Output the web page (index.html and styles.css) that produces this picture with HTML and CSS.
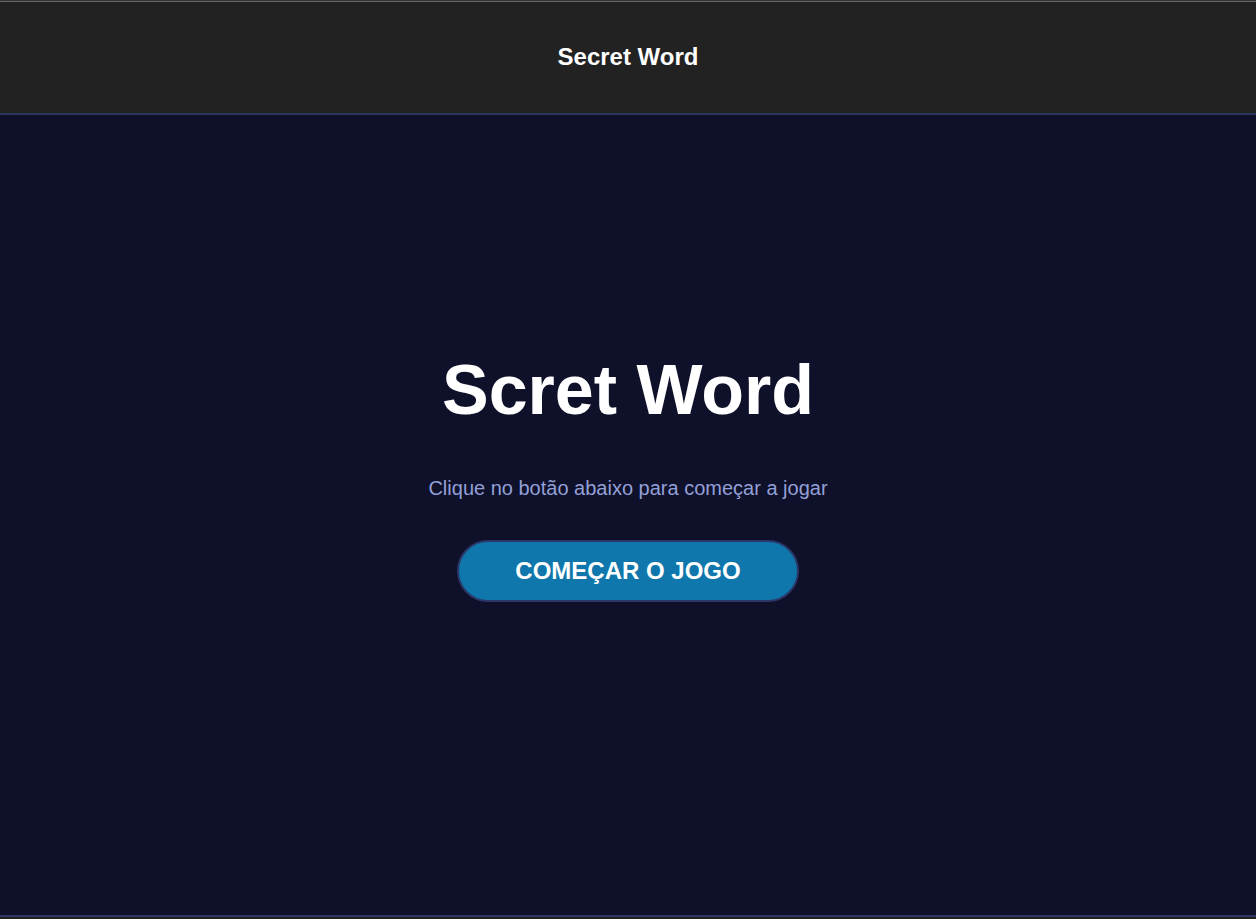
FILE: index.html
```html
<!DOCTYPE html>
<html lang="pt-BR">
<head>
  <meta charset="utf-8">
  <meta name="viewport" content="width=device-width, initial-scale=1">
  <title>Secret Word</title>
  <link rel="stylesheet" href="styles.css">
</head>
<body>
  <header class="header">
    <h2 class="header-title">Secret Word</h2>
  </header>
  <main class="start">
    <h1 class="start-title">Scret Word</h1>
    <p class="start-text">Clique no botão abaixo para começar a jogar</p>
    <button class="start-button" type="button">COMEÇAR O JOGO</button>
  </main>
  <footer class="footer"></footer>
</body>
</html>
```
FILE: styles.css
```css
* {
  box-sizing: border-box;
}

body {
  display: flex;
  flex-direction: column;
  min-height: 100vh;
  margin: 0;
  border-top: 1px solid #333;
  background: #0f1029;
  color: #fff;
  font-family: Arial, "Liberation Sans", sans-serif;
}

.header {
  padding: 41px 16px 43px;
  border-top: 1px solid #666;
  border-bottom: 2px solid #2b3560;
  background: #222;
  text-align: center;
}

.header-title {
  margin: 0;
  font-size: 24px;
  line-height: 27px;
}

.start {
  display: flex;
  flex: 1;
  flex-direction: column;
  align-items: center;
  padding: 235px 16px 16px;
  text-align: center;
}

.start-title {
  margin: 0;
  font-size: 70px;
  line-height: 80px;
}

.start-text {
  margin: 46px 0 40px;
  color: #93a0d8;
  font-size: 20px;
  line-height: 24px;
}

.start-button {
  padding: 16px 56px;
  border: 2px solid #2b3768;
  border-radius: 32px;
  background: #0f77ab;
  color: #fff;
  font: bold 24px/26px Arial, "Liberation Sans", sans-serif;
  cursor: pointer;
}

.footer {
  height: 4px;
  border-top: 2px solid #32355f;
  background: #222;
}
```
